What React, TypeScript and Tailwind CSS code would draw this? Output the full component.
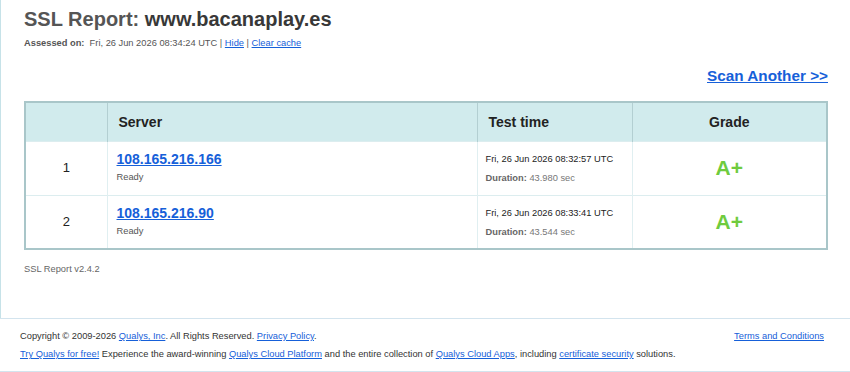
import React from 'react';

interface Endpoint {
  ip: string;
  status: string;
  testTime: string;
  duration: string;
  grade: string;
}

const endpoints: Endpoint[] = [
  { ip: '108.165.216.166', status: 'Ready', testTime: 'Fri, 26 Jun 2026 08:32:57 UTC', duration: '43.980 sec', grade: 'A+' },
  { ip: '108.165.216.90', status: 'Ready', testTime: 'Fri, 26 Jun 2026 08:33:41 UTC', duration: '43.544 sec', grade: 'A+' },
];

const linkCls = 'text-[#1660d9] underline';

const App = () => {
  return (
    <div className="w-[850px] h-[372px] overflow-hidden bg-white font-['Liberation_Sans',Arial,sans-serif] text-[#333]">
      {/* main report area */}
      <div className="border-l border-[#c6e2e8] pl-[23px] pr-[22px] pt-[7px] pb-[43px]">
        <h1 className="text-[20px] leading-[24px] font-bold text-[#555]">
          SSL Report: <span className="text-[#383838]">www.bacanaplay.es</span>
        </h1>
        <div className="mt-[6px] text-[9.3px] leading-[12px] text-[#555]">
          <span className="font-bold">Assessed on:</span>&nbsp;&nbsp;Fri, 26 Jun 2026 08:34:24 UTC |{' '}
          <a href="#" className={linkCls}>Hide</a> | <a href="#" className={linkCls}>Clear cache</a>
        </div>
        <div className="mt-[18px] flex justify-end">
          <a href="#" className="text-[15.3px] leading-[18px] font-bold text-[#1660d9] underline">
            Scan Another &gt;&gt;
          </a>
        </div>

        <table className="mt-[16px] w-[804px] border-collapse border-2 border-[#a9c6c9] table-fixed">
          <colgroup>
            <col className="w-[82px]" />
            <col className="w-[370px]" />
            <col className="w-[155px]" />
            <col />
          </colgroup>
          <thead>
            <tr className="bg-[#d1ebed] h-[39px] text-[#222]">
              <th className="border-r border-[#b3cfd2]"></th>
              <th className="border-r border-[#b3cfd2] text-left pl-[11px] pt-[1px] text-[14px] font-bold">Server</th>
              <th className="border-r border-[#b3cfd2] text-left pl-[11px] pt-[1px] text-[14px] font-bold">Test time</th>
              <th className="text-center pt-[1px] text-[14px] font-bold">Grade</th>
            </tr>
          </thead>
          <tbody>
            {endpoints.map((ep, i) => (
              <tr key={ep.ip} className="h-[54px] border-t border-[#dcedef]">
                <td className="border-r border-[#e0eff1] text-center text-[13px] text-[#222]">{i + 1}</td>
                <td className="border-r border-[#e0eff1] align-top pl-[9px] pt-[9px]">
                  <a href="#" className="block text-[14px] leading-[16px] font-bold text-[#1660d9] underline">{ep.ip}</a>
                  <div className="mt-[4px] text-[9.3px] leading-[12px] text-[#555]">{ep.status}</div>
                </td>
                <td className="border-r border-[#e0eff1] align-top pl-[8px] pt-[11px] text-[9.3px] leading-[12px]">
                  <div className="text-[#222]">{ep.testTime}</div>
                  <div className="mt-[7px] text-[#777]">
                    <span className="font-bold text-[#666]">Duration:</span> {ep.duration}
                  </div>
                </td>
                <td className="text-center text-[21px] font-bold text-[#6fcb3e]">{ep.grade}</td>
              </tr>
            ))}
          </tbody>
        </table>

        <div className="mt-[13px] text-[9.3px] leading-[12px] text-[#666]">SSL Report v2.4.2</div>
      </div>

      {/* footer */}
      <footer className="border-t border-b border-[#d3e4ee] pl-[20px] pr-[26px] pt-[11px] pb-[11px] text-[9.3px] leading-[12px] text-[#333]">
        <div className="flex justify-between">
          <div>
            Copyright © 2009-2026 <a href="#" className={linkCls}>Qualys, Inc</a>. All Rights Reserved.{' '}
            <a href="#" className={linkCls}>Privacy Policy</a>.
          </div>
          <a href="#" className={linkCls}>Terms and Conditions</a>
        </div>
        <div className="mt-[6px]">
          <a href="#" className={linkCls}>Try Qualys for free!</a> Experience the award-winning{' '}
          <a href="#" className={linkCls}>Qualys Cloud Platform</a> and the entire collection of{' '}
          <a href="#" className={linkCls}>Qualys Cloud Apps</a>, including{' '}
          <a href="#" className={linkCls}>certificate security</a> solutions.
        </div>
      </footer>
    </div>
  );
};

export default App;
